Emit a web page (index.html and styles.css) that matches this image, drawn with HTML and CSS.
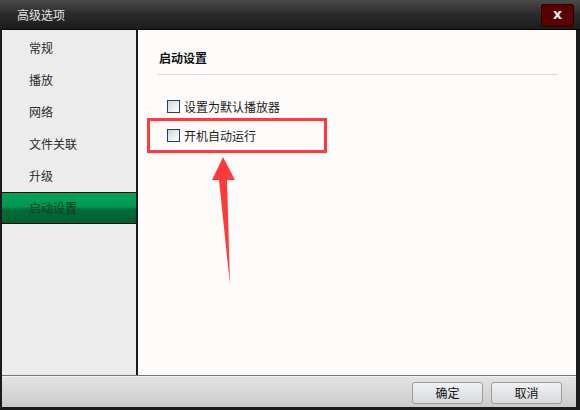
FILE: index.html
```html
<!DOCTYPE html>
<html lang="zh-CN">
<head>
    <meta charset="UTF-8">
    <title>高级选项</title>
    <link rel="stylesheet" href="styles.css">
</head>
<body>
    <div class="window">
        <div class="titlebar">
            <span class="title">高级选项</span>
            <span class="closebtn">x</span>
        </div>

        <div class="main">
            <div class="sidebar">
                <a href="#">常规</a>
                <a href="#">播放</a>
                <a href="#">网络</a>
                <a href="#">文件关联</a>
                <a href="#">升级</a>
                <a href="#" class="active">启动设置</a>
            </div>

            <div class="content">
                <div class="section-title">启动设置</div>
                <div class="options">
                    <label class="option"><span class="check"></span>设置为默认播放器</label>
                    <label class="option"><span class="check"></span>开机自动运行</label>
                </div>
            </div>
        </div>

        <div class="footer">
            <button>确定</button>
            <button>取消</button>
        </div>

        <!-- marcação vermelha por cima da captura -->
        <svg class="markup" width="580" height="410" viewBox="0 0 580 410">
            <rect x="148.5" y="119.5" width="177" height="32" fill="none" stroke="#ff3a3a" stroke-width="3"/>
            <polygon points="223,157 235,180 227,180 230,285 219,180 212,180" fill="#ff3a3a"/>
        </svg>
    </div>
</body>
</html>
```

FILE: styles.css
```css
body {
    margin: 0;
    padding: 0;
    font-family: "Noto Sans CJK SC", "Liberation Sans", sans-serif;
    font-size: 12px;
}

.window {
    position: relative;
    width: 580px;
    height: 410px;
    box-sizing: border-box;
    display: flex;
    flex-direction: column;
    background-color: #1b1b1b;
    border-left: 2px solid #1b1b1b;
    border-right: 4px solid #1b1b1b;
    border-bottom: 2px solid #1b1b1b;
}

/* Barra de título */
.titlebar {
    height: 29px;
    margin: 0 -4px 0 -2px;
    border-bottom: 1px solid #050505;
    background: linear-gradient(#4a4a4a, #2a2a2a 50%, #1c1c1c);
    display: flex;
    align-items: center;
    justify-content: space-between;
    padding: 0 6px 0 17px;
}

.title {
    color: #e6e6e6;
    font-size: 12px;
    line-height: 14px;
}

.closebtn {
    width: 31px;
    height: 21px;
    margin-top: 1px;
    background-color: #5a0000;
    border: 1px solid #2c0000;
    border-radius: 2px;
    color: #e8e8e8;
    font-family: "DejaVu Sans", sans-serif;
    font-weight: bold;
    font-size: 14px;
    line-height: 19px;
    text-align: center;
}

/* Área principal */
.main {
    height: 345px;
    display: flex;
}

.sidebar {
    width: 134px;
    background-color: #ececec;
    border-right: 2px solid #1b1b1b;
    padding-top: 2px;
}

.sidebar a {
    display: block;
    height: 32px;
    line-height: 32px;
    padding-left: 27px;
    color: #2a2a2a;
    text-decoration: none;
    box-sizing: border-box;
}

.sidebar a.active {
    background: linear-gradient(#00a455, #009650 45%, #006e37 55%, #005f2e);
    border-top: 1px solid #0c0c0c;
    border-bottom: 1px solid #0c0c0c;
    line-height: 30px;
    color: #173b24;
}

.content {
    flex: 1;
    background-color: #fdfcfb;
    padding: 0 18px 0 19px;
}

.section-title {
    padding: 21px 0 9px 2px;
    line-height: 14px;
    font-weight: bold;
    color: #111;
    border-bottom: 1px solid #dcdcdc;
}

.options {
    margin-top: 17px;
}

.option {
    display: flex;
    align-items: center;
    height: 29px;
    padding-left: 10px;
    color: #1a1a1a;
}

.check {
    width: 11px;
    height: 11px;
    border: 1px solid #1d3f6c;
    background: linear-gradient(135deg, #d4d4d2, #f4f4f2 70%, #fff);
    margin-right: 4px;
}

/* Rodapé */
.footer {
    height: 32px;
    border-top: 1px solid #777;
    box-shadow: inset 0 1px 0 #f2f2f2;
    background: linear-gradient(#e4e4e4, #cbcbcb);
    display: flex;
    justify-content: flex-end;
    align-items: center;
    gap: 8px;
    padding: 2px 14px 0 0;
    box-sizing: border-box;
}

button {
    width: 71px;
    height: 22px;
    border: 1px solid #9c9c9c;
    border-radius: 3px;
    background: linear-gradient(#f2f2f2, #e2e5e8 50%, #d6dadf);
    font-family: "Noto Sans CJK SC", sans-serif;
    font-size: 12px;
    color: #111;
    padding: 0;
}

.markup {
    position: absolute;
    top: 0;
    left: -2px;
    pointer-events: none;
}
```
